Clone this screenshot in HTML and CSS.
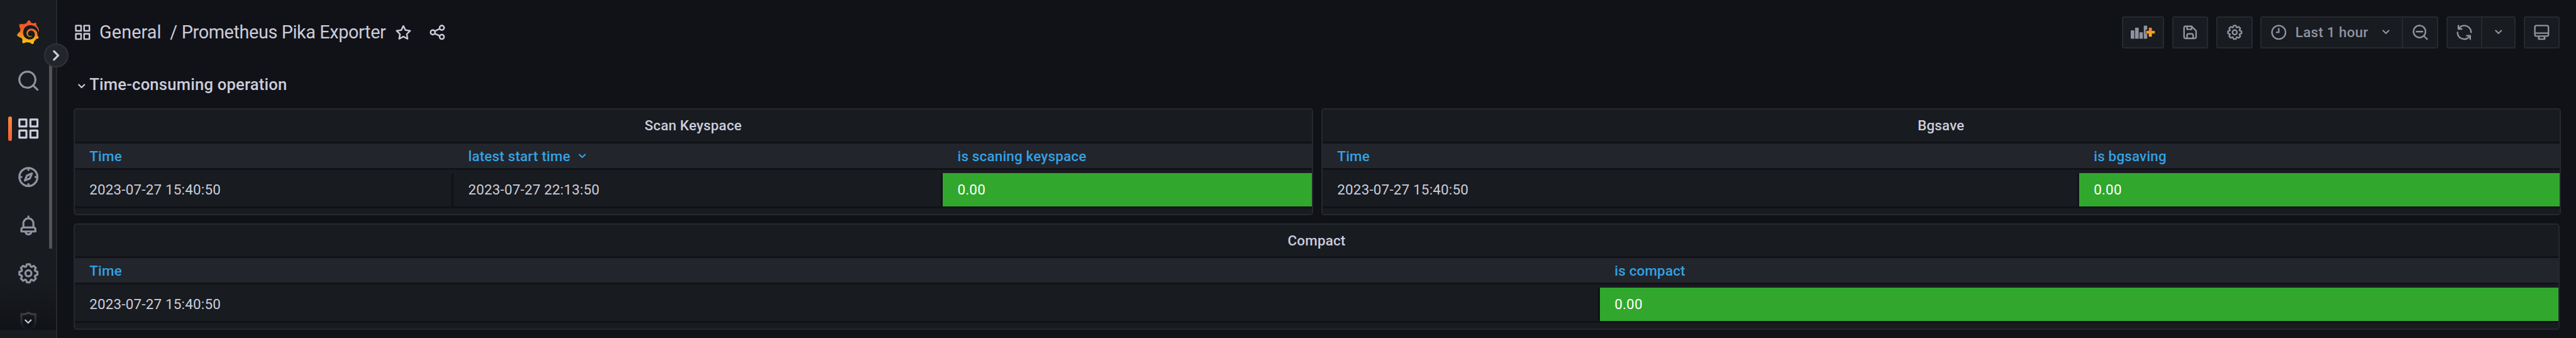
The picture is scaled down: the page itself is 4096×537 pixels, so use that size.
FILE: index.html
```html
<!DOCTYPE html>
<html lang="en">
<head>
<meta charset="utf-8">
<title>Prometheus Pika Exporter</title>
<link rel="stylesheet" href="styles.css">
</head>
<body>
<svg class="defs" aria-hidden="true">
  <defs>
    <symbol id="apps" viewBox="0 0 24 24"><path d="M10,13H3a1,1,0,0,0-1,1v7a1,1,0,0,0,1,1h7a1,1,0,0,0,1-1V14A1,1,0,0,0,10,13ZM9,20H4V15H9ZM21,2H14a1,1,0,0,0-1,1v7a1,1,0,0,0,1,1h7a1,1,0,0,0,1-1V3A1,1,0,0,0,21,2ZM20,9H15V4h5Zm1,4H14a1,1,0,0,0-1,1v7a1,1,0,0,0,1,1h7a1,1,0,0,0,1-1V14A1,1,0,0,0,21,13Zm-1,7H15V15h5ZM10,2H3A1,1,0,0,0,2,3v7a1,1,0,0,0,1,1h7a1,1,0,0,0,1-1V3A1,1,0,0,0,10,2ZM9,9H4V4H9Z"/></symbol>
    <symbol id="search" viewBox="0 0 24 24"><path d="M21.71,20.29,18,16.61A9,9,0,1,0,16.61,18l3.68,3.68a1,1,0,0,0,1.42,0A1,1,0,0,0,21.71,20.29ZM11,18a7,7,0,1,1,7-7A7,7,0,0,1,11,18Z"/></symbol>
    <symbol id="compass" viewBox="0 0 24 24"><path d="M12,2A10,10,0,1,0,22,12,10,10,0,0,0,12,2Zm1,17.93V19a1,1,0,0,0-2,0v.93A8,8,0,0,1,4.07,13H5a1,1,0,0,0,0-2H4.07A8,8,0,0,1,11,4.07V5a1,1,0,0,0,2,0V4.07A8,8,0,0,1,19.93,11H19a1,1,0,0,0,0,2h.93A8,8,0,0,1,13,19.93ZM15.14,7.55l-5,2.12a1,1,0,0,0-.52.52l-2.12,5a1,1,0,0,0,.21,1.1,1,1,0,0,0,.7.3.93.93,0,0,0,.4-.09l5-2.12a1,1,0,0,0,.52-.52l2.12-5a1,1,0,0,0-1.31-1.31Zm-2.49,5.1-2.28,1,1-2.28,2.28-1Z"/></symbol>
    <symbol id="bell" viewBox="0 0 24 24"><path d="M18,13.18V10a6,6,0,0,0-5-5.91V3a1,1,0,0,0-2,0V4.09A6,6,0,0,0,6,10v3.18A3,3,0,0,0,4,16v2a1,1,0,0,0,1,1H8.14a4,4,0,0,0,7.72,0H19a1,1,0,0,0,1-1V16A3,3,0,0,0,18,13.18ZM8,10a4,4,0,0,1,8,0v3H8Zm4,10a2,2,0,0,1-1.72-1h3.44A2,2,0,0,1,12,20Zm6-3H6V16a1,1,0,0,1,1-1H17a1,1,0,0,1,1,1Z"/></symbol>
    <symbol id="cog" viewBox="0 0 24 24"><path d="M21.32,9.55l-1.89-.63.89-1.78A1,1,0,0,0,20.13,6L18,3.87a1,1,0,0,0-1.15-.19l-1.78.89-.63-1.89A1,1,0,0,0,13.5,2h-3a1,1,0,0,0-.95.68L8.92,4.57,7.14,3.68A1,1,0,0,0,6,3.87L3.87,6a1,1,0,0,0-.19,1.15l.89,1.78-1.89.63A1,1,0,0,0,2,10.5v3a1,1,0,0,0,.68.95l1.89.63-.89,1.78A1,1,0,0,0,3.87,18L6,20.13a1,1,0,0,0,1.15.19l1.78-.89.63,1.89a1,1,0,0,0,.95.68h3a1,1,0,0,0,.95-.68l.63-1.89,1.78.89A1,1,0,0,0,18,20.13L20.13,18a1,1,0,0,0,.19-1.15l-.89-1.78,1.89-.63A1,1,0,0,0,22,13.5v-3A1,1,0,0,0,21.32,9.55ZM20,12.78l-1.2.4A2,2,0,0,0,17.64,16l.57,1.14-1.1,1.1L16,17.64a2,2,0,0,0-2.79,1.16l-.4,1.2H11.22l-.4-1.2A2,2,0,0,0,8,17.64l-1.14.57-1.1-1.1L6.36,16A2,2,0,0,0,5.2,13.18L4,12.78V11.22l1.2-.4A2,2,0,0,0,6.36,8L5.79,6.89l1.1-1.1L8,6.36A2,2,0,0,0,10.82,5.2l.4-1.2h1.56l.4,1.2A2,2,0,0,0,16,6.36l1.14-.57,1.1,1.1L17.64,8a2,2,0,0,0,1.16,2.79l1.2.4ZM12,8a4,4,0,1,0,4,4A4,4,0,0,0,12,8Zm0,6a2,2,0,1,1,2-2A2,2,0,0,1,12,14Z"/></symbol>
    <symbol id="shield" viewBox="0 0 24 24"><path d="M19.63,3.65a1,1,0,0,0-.84-.2,8,8,0,0,1-6.22-1.27,1,1,0,0,0-1.14,0A8,8,0,0,1,5.21,3.45a1,1,0,0,0-.84.2A1,1,0,0,0,4,4.43v7.45a9,9,0,0,0,3.77,7.33l3.65,2.6a1,1,0,0,0,1.16,0l3.65-2.6A9,9,0,0,0,20,11.88V4.43A1,1,0,0,0,19.63,3.65ZM18,11.88a7,7,0,0,1-2.93,5.7L12,19.77,8.93,17.58A7,7,0,0,1,6,11.88V5.58a10,10,0,0,0,6-1.39,10,10,0,0,0,6,1.39Z"/></symbol>
    <symbol id="angle-down" viewBox="0 0 24 24"><path d="M17,9.17a1,1,0,0,0-1.41,0L12,12.71,8.46,9.17a1,1,0,0,0-1.41,0,1,1,0,0,0,0,1.42l4.24,4.24a1,1,0,0,0,1.42,0L17,10.59A1,1,0,0,0,17,9.17Z"/></symbol>
    <symbol id="angle-right" viewBox="0 0 24 24"><path d="M14.83,11.29,10.59,7.05a1,1,0,0,0-1.42,0,1,1,0,0,0,0,1.41L12.71,12,9.17,15.54a1,1,0,0,0,0,1.41,1,1,0,0,0,.71.29,1,1,0,0,0,.71-.29l4.24-4.24A1,1,0,0,0,14.83,11.29Z"/></symbol>
    <symbol id="star" viewBox="0 0 24 24"><path d="M22,9.67A1,1,0,0,0,21.14,9l-5.69-.83L12.9,3a1,1,0,0,0-1.8,0L8.55,8.16,2.86,9a1,1,0,0,0-.81.68,1,1,0,0,0,.25,1l4.13,4-1,5.68A1,1,0,0,0,6.9,21.44L12,18.77l5.1,2.67a.93.93,0,0,0,.46.12,1,1,0,0,0,.59-.19,1,1,0,0,0,.4-1l-1-5.68,4.13-4A1,1,0,0,0,22,9.67Zm-6.15,4a1,1,0,0,0-.29.88l.72,4.2-3.76-2a1.06,1.06,0,0,0-.94,0l-3.76,2,.72-4.2a1,1,0,0,0-.29-.88l-3-3,4.21-.61a1,1,0,0,0,.76-.55L12,5.7l1.88,3.82a1,1,0,0,0,.76.55l4.21.61Z"/></symbol>
    <symbol id="share" viewBox="0 0 24 24"><path d="M18,14a4,4,0,0,0-3.08,1.48l-5.1-2.35a3.64,3.64,0,0,0,0-2.26l5.1-2.35A4,4,0,1,0,14,6a4.17,4.17,0,0,0,.07.71L8.79,9.14a4,4,0,1,0,0,5.72l5.28,2.43A4.17,4.17,0,0,0,14,18a4,4,0,1,0,4-4ZM18,4a2,2,0,1,1-2,2A2,2,0,0,1,18,4ZM6,14a2,2,0,1,1,2-2A2,2,0,0,1,6,14Zm12,6a2,2,0,1,1,2-2A2,2,0,0,1,18,20Z"/></symbol>
    <symbol id="save" viewBox="0 0 24 24"><path d="M20.71,9.29l-6-6a1,1,0,0,0-.32-.21A1.09,1.09,0,0,0,14,3H6A3,3,0,0,0,3,6V18a3,3,0,0,0,3,3H18a3,3,0,0,0,3-3V10A1,1,0,0,0,20.71,9.29ZM9,5h4V7H9Zm6,14H9V16a1,1,0,0,1,1-1h4a1,1,0,0,1,1,1Zm4-1a1,1,0,0,1-1,1H17V16a3,3,0,0,0-3-3H10a3,3,0,0,0-3,3v3H6a1,1,0,0,1-1-1V6A1,1,0,0,1,6,5H7V8A1,1,0,0,0,8,9h6a1,1,0,0,0,1-1V6.41l4,4Z"/></symbol>
    <symbol id="clock" viewBox="0 0 24 24"><path d="M12,2A10,10,0,1,0,22,12,10,10,0,0,0,12,2Zm0,18a8,8,0,1,1,8-8A8,8,0,0,1,12,20ZM12,6a1,1,0,0,0-1,1v4H9a1,1,0,0,0,0,2h3a1,1,0,0,0,1-1V7A1,1,0,0,0,12,6Z"/></symbol>
    <symbol id="search-minus" viewBox="0 0 24 24"><path d="M21.71,20.29,18,16.61A9,9,0,1,0,16.61,18l3.68,3.68a1,1,0,0,0,1.42,0A1,1,0,0,0,21.71,20.29ZM11,18a7,7,0,1,1,7-7A7,7,0,0,1,11,18Zm4-8H7a1,1,0,0,0,0,2h8a1,1,0,0,0,0-2Z"/></symbol>
    <symbol id="sync" viewBox="0 0 24 24"><path d="M19.91,15.51H15.38a1,1,0,0,0,0,2h2.4A8,8,0,0,1,4,12a1,1,0,0,0-2,0,10,10,0,0,0,16.88,7.23V21a1,1,0,0,0,2,0V16.5A1,1,0,0,0,19.91,15.51ZM12,2A10,10,0,0,0,5.12,4.77V3a1,1,0,0,0-2,0V7.5a1,1,0,0,0,1,1h4.5a1,1,0,0,0,0-2H6.22A8,8,0,0,1,20,12a1,1,0,0,0,2,0A10,10,0,0,0,12,2Z"/></symbol>
    <symbol id="monitor" viewBox="0 0 24 24"><path d="M19,2H5A3,3,0,0,0,2,5V15a3,3,0,0,0,3,3H7.64l-.58,1a2,2,0,0,0,0,2,2,2,0,0,0,1.75,1h6.46A2,2,0,0,0,17,21a2,2,0,0,0,0-2l-.59-1H19a3,3,0,0,0,3-3V5A3,3,0,0,0,19,2ZM8.77,20,10,18H14l1.2,2ZM20,15a1,1,0,0,1-1,1H5a1,1,0,0,1-1-1V14H20Zm0-3H4V5A1,1,0,0,1,5,4H19a1,1,0,0,1,1,1Z"/></symbol>
    <linearGradient id="logo-fill" gradientUnits="userSpaceOnUse" x1="175.5" y1="445" x2="175.5" y2="114">
      <stop offset="0" stop-color="#fff100"/><stop offset="1" stop-color="#f05a28"/>
    </linearGradient>
    <linearGradient id="plus-fill" gradientUnits="userSpaceOnUse" x1="0" y1="69" x2="0" y2="15">
      <stop offset="0" stop-color="#f9c20a"/><stop offset="1" stop-color="#ee7540"/>
    </linearGradient>
  </defs>
</svg>

<div class="app">
  <nav class="sidebar">
    <div class="nav-scroll">
      <a class="nav-item"><svg class="logo" viewBox="0 0 351 365"><path fill="url(#logo-fill)" d="M342,161.2c-0.6-6.1-1.6-13.1-3.6-20.9c-2-7.7-5-16.2-9.4-25c-4.4-8.8-10.1-17.9-17.5-26.8c-2.9-3.5-6.1-6.9-9.5-10.2c5.1-20.3-6.2-37.9-6.2-37.9c-19.5-1.2-31.9,6.1-36.5,9.4c-0.8-0.3-1.5-0.7-2.3-1c-3.3-1.3-6.7-2.6-10.3-3.7c-3.5-1.1-7.1-2.1-10.8-3c-3.7-0.9-7.4-1.6-11.2-2.2c-0.7-0.1-1.3-0.2-2-0.3c-8.5-27.2-32.9-38.6-32.9-38.6c-27.3,17.3-32.4,41.5-32.4,41.5s-0.1,0.5-0.3,1.4c-1.5,0.4-3,0.9-4.5,1.3c-2.1,0.6-4.2,1.4-6.2,2.2c-2.1,0.8-4.1,1.6-6.2,2.5c-4.1,1.8-8.2,3.8-12.2,6c-3.9,2.2-7.7,4.6-11.4,7.1c-0.5-0.2-1-0.4-1-0.4c-37.8-14.4-71.3,2.9-71.3,2.9c-3.1,40.2,15.1,65.5,18.7,70.1c-0.9,2.5-1.7,5-2.5,7.5c-2.8,9.1-4.9,18.4-6.2,28.1c-0.2,1.4-0.4,2.8-0.5,4.2C18.8,192.7,8.5,228,8.5,228c29.1,33.5,63.1,35.6,63.1,35.6c0,0,0.1-0.1,0.1-0.1c4.3,7.7,9.3,15,14.9,21.9c2.4,2.9,4.8,5.6,7.4,8.3c-10.6,30.4,1.5,55.6,1.5,55.6c32.4,1.2,53.7-14.2,58.2-17.7c3.2,1.1,6.5,2.1,9.8,2.9c10,2.6,20.2,4.1,30.4,4.5c2.5,0.1,5.1,0.2,7.6,0.1l1.2,0l0.8,0l1.6,0l1.6-0.1l0,0.1c15.3,21.8,42.1,24.9,42.1,24.9c19.1-20.1,20.2-40.1,20.2-44.4l0,0c0,0,0-0.1,0-0.3c0-0.4,0-0.6,0-0.6l0,0c0-0.3,0-0.6,0-0.9c4-2.8,7.8-5.8,11.4-9.1c7.6-6.9,14.3-14.8,19.9-23.3c0.5-0.8,1-1.6,1.5-2.4c21.6,1.2,36.9-13.4,36.9-13.4c-3.6-22.5-16.4-33.5-19.1-35.6l0,0c0,0-0.1-0.1-0.3-0.2c-0.2-0.1-0.2-0.2-0.2-0.2c0,0,0,0,0,0c-0.1-0.1-0.3-0.2-0.5-0.3c0.1-1.4,0.2-2.7,0.3-4.1c0.2-2.4,0.2-4.9,0.2-7.3l0-1.8l0-0.9l0-0.5c0-0.6,0-0.4,0-0.6l-0.1-1.5l-0.1-2c0-0.7-0.1-1.3-0.2-1.9c-0.1-0.6-0.1-1.3-0.2-1.9l-0.2-1.9l-0.3-1.9c-0.4-2.5-0.8-4.9-1.4-7.4c-2.3-9.7-6.1-18.9-11-27.2c-5-8.3-11.2-15.6-18.3-21.8c-7-6.2-14.9-11.2-23.1-14.9c-8.3-3.7-16.9-6.1-25.5-7.2c-4.3-0.6-8.6-0.8-12.9-0.7l-1.6,0l-0.4,0c-0.1,0-0.6,0-0.5,0l-0.7,0l-1.6,0.1c-0.6,0-1.2,0.1-1.7,0.1c-2.2,0.2-4.4,0.5-6.5,0.9c-8.6,1.6-16.7,4.7-23.8,9c-7.1,4.3-13.3,9.6-18.3,15.6c-5,6-8.9,12.7-11.6,19.6c-2.7,6.9-4.2,14.1-4.6,21c-0.1,1.7-0.1,3.5-0.1,5.2c0,0.4,0,0.9,0,1.3l0.1,1.4c0.1,0.8,0.1,1.7,0.2,2.5c0.3,3.5,1,6.9,1.9,10.1c1.9,6.5,4.9,12.4,8.6,17.4c3.7,5,8.2,9.1,12.9,12.4c4.7,3.2,9.8,5.5,14.8,7c5,1.5,10,2.1,14.7,2.1c0.6,0,1.2,0,1.7,0c0.3,0,0.6,0,0.9,0c0.3,0,0.6,0,0.9-0.1c0.5,0,1-0.1,1.5-0.1c0.1,0,0.3,0,0.4-0.1l0.5-0.1c0.3,0,0.6-0.1,0.9-0.1c0.6-0.1,1.1-0.2,1.7-0.3c0.6-0.1,1.1-0.2,1.6-0.4c1.1-0.2,2.1-0.6,3.1-0.9c2-0.7,4-1.5,5.7-2.4c1.8-0.9,3.4-2,5-3c0.4-0.3,0.9-0.6,1.3-1c1.6-1.3,1.9-3.7,0.6-5.3c-1.1-1.4-3.1-1.8-4.7-0.9c-0.4,0.2-0.8,0.4-1.2,0.6c-1.4,0.7-2.8,1.3-4.3,1.8c-1.5,0.5-3.1,0.9-4.7,1.2c-0.8,0.1-1.6,0.2-2.5,0.3c-0.4,0-0.8,0.1-1.3,0.1c-0.4,0-0.9,0-1.2,0c-0.4,0-0.8,0-1.2,0c-0.5,0-1,0-1.5-0.1c0,0-0.3,0-0.1,0l-0.2,0l-0.3,0c-0.2,0-0.5,0-0.7-0.1c-0.5-0.1-0.9-0.1-1.4-0.2c-3.7-0.5-7.4-1.6-10.9-3.2c-3.6-1.6-7-3.8-10.1-6.6c-3.1-2.8-5.8-6.1-7.9-9.9c-2.1-3.8-3.6-8-4.3-12.4c-0.3-2.2-0.5-4.5-0.4-6.7c0-0.6,0.1-1.2,0.1-1.8c0,0.2,0-0.1,0-0.1l0-0.2l0-0.5c0-0.3,0.1-0.6,0.1-0.9c0.1-1.2,0.3-2.4,0.5-3.6c1.7-9.6,6.5-19,13.9-26.1c1.9-1.8,3.9-3.4,6-4.9c2.1-1.5,4.4-2.8,6.8-3.9c2.4-1.1,4.8-2,7.4-2.7c2.5-0.7,5.1-1.1,7.8-1.4c1.3-0.1,2.6-0.2,4-0.2c0.4,0,0.6,0,0.9,0l1.1,0l0.7,0c0.3,0,0,0,0.1,0l0.3,0l1.1,0.1c2.9,0.2,5.7,0.6,8.5,1.3c5.6,1.2,11.1,3.3,16.2,6.1c10.2,5.7,18.9,14.5,24.2,25.1c2.7,5.3,4.6,11,5.5,16.9c0.2,1.5,0.4,3,0.5,4.5l0.1,1.1l0.1,1.1c0,0.4,0,0.8,0,1.1c0,0.4,0,0.8,0,1.1l0,1l0,1.1c0,0.7-0.1,1.9-0.1,2.6c-0.1,1.6-0.3,3.3-0.5,4.9c-0.2,1.6-0.5,3.2-0.8,4.8c-0.3,1.6-0.7,3.2-1.1,4.7c-0.8,3.1-1.8,6.2-3,9.3c-2.4,6-5.6,11.8-9.4,17.1c-7.7,10.6-18.2,19.2-30.2,24.7c-6,2.7-12.3,4.7-18.8,5.7c-3.2,0.6-6.5,0.9-9.8,1l-0.6,0l-0.5,0l-1.1,0l-1.6,0l-0.8,0c0.4,0-0.1,0-0.1,0l-0.3,0c-1.8,0-3.5-0.1-5.3-0.3c-7-0.5-13.9-1.8-20.7-3.7c-6.7-1.9-13.2-4.6-19.4-7.8c-12.3-6.6-23.4-15.6-32-26.5c-4.3-5.4-8.1-11.3-11.2-17.4c-3.1-6.1-5.6-12.6-7.4-19.1c-1.8-6.6-2.9-13.3-3.4-20.1l-0.1-1.3l0-0.3l0-0.3l0-0.6l0-1.1l0-0.3l0-0.4l0-0.8l0-1.6l0-0.3c0,0,0,0.1,0-0.1l0-0.6c0-0.8,0-1.7,0-2.5c0.1-3.3,0.4-6.8,0.8-10.2c0.4-3.4,1-6.9,1.7-10.3c0.7-3.4,1.5-6.8,2.5-10.2c1.9-6.7,4.3-13.2,7.1-19.3c5.7-12.2,13.1-23.1,22-31.8c2.2-2.2,4.5-4.2,6.9-6.2c2.4-1.9,4.9-3.7,7.5-5.4c2.5-1.7,5.2-3.2,7.9-4.6c1.3-0.7,2.7-1.4,4.1-2c0.7-0.3,1.4-0.6,2.1-0.9c0.7-0.3,1.4-0.6,2.1-0.9c2.8-1.2,5.7-2.2,8.7-3.1c0.7-0.2,1.5-0.4,2.2-0.7c0.7-0.2,1.5-0.4,2.2-0.6c1.5-0.4,3-0.8,4.5-1.1c0.7-0.2,1.5-0.3,2.3-0.5c0.8-0.2,1.5-0.3,2.3-0.5c0.8-0.1,1.5-0.3,2.3-0.4l1.1-0.2l1.2-0.2c0.8-0.1,1.5-0.2,2.3-0.3c0.9-0.1,1.7-0.2,2.6-0.3c0.7-0.1,1.9-0.2,2.6-0.3c0.5-0.1,1.1-0.1,1.6-0.2l1.1-0.1l0.5-0.1l0.6,0c0.9-0.1,1.7-0.1,2.6-0.2l1.3-0.1c0,0,0.5,0,0.1,0l0.3,0l0.6,0c0.7,0,1.5-0.1,2.2-0.1c2.9-0.1,5.9-0.1,8.8,0c5.8,0.2,11.5,0.9,17,1.9c11.1,2.1,21.5,5.6,31,10.3c9.5,4.6,17.9,10.3,25.3,16.5c0.5,0.4,0.9,0.8,1.4,1.2c0.4,0.4,0.9,0.8,1.3,1.2c0.9,0.8,1.7,1.6,2.6,2.4c0.9,0.8,1.7,1.6,2.5,2.4c0.8,0.8,1.6,1.6,2.4,2.5c3.1,3.3,6,6.6,8.6,10c5.2,6.7,9.4,13.5,12.7,19.9c0.2,0.4,0.4,0.8,0.6,1.2c0.2,0.4,0.4,0.8,0.6,1.2c0.4,0.8,0.8,1.6,1.1,2.4c0.4,0.8,0.7,1.5,1.1,2.3c0.3,0.8,0.7,1.5,1,2.3c1.2,3,2.4,5.9,3.3,8.6c1.5,4.4,2.6,8.3,3.5,11.7c0.3,1.4,1.6,2.3,3,2.1c1.5-0.1,2.6-1.3,2.6-2.8C342.6,170.4,342.5,166.1,342,161.2z"/></svg></a>
      <a class="nav-item"><svg class="icon-24"><use href="#search"/></svg></a>
      <a class="nav-item active"><svg class="icon-24"><use href="#apps"/></svg></a>
      <a class="nav-item"><svg class="icon-24"><use href="#compass"/></svg></a>
      <a class="nav-item"><svg class="icon-24"><use href="#bell"/></svg></a>
      <a class="nav-item"><svg class="icon-24"><use href="#cog"/></svg></a>
      <a class="nav-item"><svg class="icon-24"><use href="#shield"/></svg></a>
      <div class="scroll-thumb"></div>
      <div class="scroll-more"><svg class="icon-16"><use href="#angle-down"/></svg></div>
    </div>
    <button class="nav-toggle"><svg class="icon-24"><use href="#angle-right"/></svg></button>
  </nav>

  <main class="main">
    <header class="toolbar">
      <div class="crumbs">
        <svg class="icon-18"><use href="#apps"/></svg>
        <span class="folder">General</span>
        <span class="slash">/</span>
        <span class="name">Prometheus Pika Exporter</span>
        <svg class="icon-18 star"><use href="#star"/></svg>
        <svg class="icon-18 share"><use href="#share"/></svg>
      </div>
      <div class="actions">
        <button class="btn btn-add">
          <svg class="add-panel" viewBox="0 0 144 84"><path d="M1.5 31h18.500a1.500 1.500 0 0 1 1.500 1.500V81H0V32.500A1.500 1.500 0 0 1 1.500 31ZM27.500 15H46a1.500 1.500 0 0 1 1.500 1.500V81H26V16.500A1.500 1.500 0 0 1 27.500 15ZM53 42h18.500a1 1 0 0 1 1 1v38H52V43a1 1 0 0 1 1-1ZM79.500 3H97a1.500 1.500 0 0 1 1.500 1.500V27H92a3 3 0 0 0-3 3v18a3 3 0 0 0 3 3h6.500v30H78V4.500A1.500 1.500 0 0 1 79.500 3Z"/><path fill="url(#plus-fill)" d="M110 15h14a2 2 0 0 1 2 2v17h16a2 2 0 0 1 2 2v12a2 2 0 0 1-2 2h-16v17a2 2 0 0 1-2 2h-14a2 2 0 0 1-2-2V50H94a2 2 0 0 1-2-2V36a2 2 0 0 1 2-2h14V17a2 2 0 0 1 2-2Z"/></svg>
        </button>
        <button class="btn"><svg class="icon-18"><use href="#save"/></svg></button>
        <button class="btn"><svg class="icon-18"><use href="#cog"/></svg></button>
        <div class="group">
          <button class="btn btn-time"><svg class="icon-18"><use href="#clock"/></svg><span class="range">Last 1 hour</span><svg class="icon-16"><use href="#angle-down"/></svg></button>
          <button class="btn"><svg class="icon-18"><use href="#search-minus"/></svg></button>
        </div>
        <div class="group">
          <button class="btn"><svg class="icon-18"><use href="#sync"/></svg></button>
          <button class="btn btn-interval"><svg class="icon-16"><use href="#angle-down"/></svg></button>
        </div>
        <button class="btn"><svg class="icon-18"><use href="#monitor"/></svg></button>
      </div>
    </header>

    <div class="row-title"><svg class="icon-16"><use href="#angle-down"/></svg><span>Time-consuming operation</span></div>

    <div class="panels">
      <section class="panel half scan">
        <h2 class="panel-title">Scan Keyspace</h2>
        <div class="thead"><div class="col">Time</div><div class="col">latest start time<svg class="icon-16 sort"><use href="#angle-down"/></svg></div><div class="col">is scaning keyspace</div></div>
        <div class="trow"><div class="col">2023-07-27 15:40:50</div><div class="col">2023-07-27 22:13:50</div><div class="col ok">0.00</div></div>
      </section>
      <section class="panel half bgsave">
        <h2 class="panel-title">Bgsave</h2>
        <div class="thead"><div class="col">Time</div><div class="col">is bgsaving</div></div>
        <div class="trow"><div class="col">2023-07-27 15:40:50</div><div class="col ok">0.00</div></div>
      </section>
      <section class="panel full compact">
        <h2 class="panel-title">Compact</h2>
        <div class="thead"><div class="col">Time</div><div class="col">is compact</div></div>
        <div class="trow"><div class="col">2023-07-27 15:40:50</div><div class="col ok">0.00</div></div>
      </section>
    </div>
  </main>
</div>
</body>
</html>
```
FILE: styles.css
```css
/* 0.1rem is one design pixel */
html { font-size: 15.97504px; }
*, *::before, *::after { box-sizing: border-box; }
body {
  margin: 0;
  background: #111217;
  color: #ccccdc;
  font-family: Roboto, "Liberation Sans", sans-serif;
  font-size: 1.4rem;
  letter-spacing: 0.0095em;
  overflow: hidden;
}
button { font: inherit; letter-spacing: inherit; color: inherit; margin: 0; padding: 0; }
svg { display: block; flex: none; fill: currentColor; }
.defs { position: absolute; width: 0; height: 0; }
.icon-16 { width: 1.6rem; height: 1.6rem; }
.icon-18 { width: 1.8rem; height: 1.8rem; }
.icon-24 { width: 2.4rem; height: 2.4rem; }

.app { display: flex; width: 100vw; height: 100vh; }

/* Sidebar */
.sidebar {
  position: relative;
  z-index: 1;
  flex: none;
  width: 5.7rem;
  height: 100%;
  background: #181b1f;
  border-right: 2px solid #26282d;
}
.nav-scroll {
  position: relative;
  height: 32.8rem;
  padding-top: 0.8rem;
  overflow: hidden;
}
.nav-item {
  position: relative;
  display: flex;
  align-items: center;
  justify-content: center;
  width: 5.6rem;
  height: 4.8rem;
  color: #9192a0;
}
.nav-item.active { color: #ccccdc; }
.nav-item.active::before {
  content: "";
  position: absolute;
  left: 0.8rem;
  top: 1.2rem;
  width: 0.4rem;
  height: 2.4rem;
  border-radius: 0.2rem;
  background: linear-gradient(180deg, #ff8833, #f55f3e);
}
.logo { width: 2.31rem; height: 2.4rem; }
.scroll-thumb {
  position: absolute;
  left: 4.9rem;
  top: 5.6rem;
  width: 0.3rem;
  height: 19.1rem;
  background: #525355;
}
.scroll-more {
  position: absolute;
  left: 0;
  bottom: 0;
  width: 5.6rem;
  height: 4.8rem;
  display: flex;
  justify-content: center;
  padding-top: 3.2rem;
  background: linear-gradient(0deg, #111217, rgba(17, 18, 23, 0));
}
.nav-toggle {
  position: absolute;
  left: 4.4rem;
  top: 4.3rem;
  width: 2.4rem;
  height: 2.4rem;
  display: flex;
  align-items: center;
  justify-content: center;
  border: 2px solid #313339;
  border-radius: 50%;
  background: #22252b;
}

/* Page header */
.main { flex: 1; min-width: 0; padding: 1.6rem 1.5rem 0 1.6rem; }
.toolbar {
  display: flex;
  align-items: center;
  justify-content: space-between;
  height: 3.2rem;
  padding-right: 0.1rem;
}
.crumbs { display: flex; align-items: center; font-size: 1.8rem; letter-spacing: 0; line-height: 3.2rem; white-space: nowrap; }
.folder { margin-left: 0.8rem; padding-top: 0.1rem; letter-spacing: 0.004em; }
.slash { margin-left: 0.85rem; padding-top: 0.1rem; }
.name { margin-left: 0.42rem; padding-top: 0.1rem; letter-spacing: -0.0125em; }
.star { margin-left: 0.84rem; }
.share { margin-left: 1.6rem; }

.actions { display: flex; gap: 0.8rem; color: #9192a0; }
.group { display: flex; }
.btn {
  display: flex;
  align-items: center;
  justify-content: center;
  width: 3.6rem;
  height: 3.2rem;
  border: 2px solid #26292e;
  border-radius: 0.2rem;
  background: #181b1f;
}
.btn-add { width: 4.2rem; }
.add-panel { width: 2.4rem; height: 1.4rem; }
.btn-time {
  width: 14.2rem;
  justify-content: flex-start;
  padding-left: 0.78rem;
  font-weight: 500;
}
.range { width: 7.4rem; margin: 0 0.8rem 0 0.76rem; text-align: left; white-space: nowrap; letter-spacing: 0.014em; }
.btn-interval { width: 3.4rem; }
.group .btn:first-child { border-top-right-radius: 0; border-bottom-right-radius: 0; }
.group .btn:last-child { border-top-left-radius: 0; border-bottom-left-radius: 0; }
.group .btn + .btn { margin-left: -2px; }
.group .btn-time + .btn { width: calc(3.5rem + 2px); }
.group .btn-interval { width: calc(3.3rem + 2px); }

/* Dashboard row */
.row-title {
  display: flex;
  align-items: center;
  height: 2.4rem;
  margin-top: 2.4rem;
  font-size: 1.6rem;
  font-weight: 500;
  letter-spacing: 0.0095em;
}
.row-title svg { position: relative; top: 0.16rem; }

/* Panels */
.panels { display: flex; flex-wrap: wrap; gap: 0.8rem; margin-top: 1.2rem; }
.panel {
  height: 10.6rem;
  border: 2px solid #25282c;
  border-radius: 0.3rem;
  background: #181b1f;
}
.half { width: 123.4rem; }
.full { width: 247.5rem; }
.panel-title {
  margin: 0;
  height: calc(3.3rem - 2px);
  line-height: 3.2rem;
  font-size: 1.4rem;
  font-weight: 500;
  text-align: center;
}
.thead, .trow { display: grid; }
.scan .thead, .scan .trow { grid-template-columns: 37.7rem 48.7rem 1fr; }
.bgsave .thead, .bgsave .trow { grid-template-columns: 75.3rem 1fr; }
.compact .thead, .compact .trow { grid-template-columns: 151.8rem 1fr; }
.thead {
  height: 2.8rem;
  border-top: 0.2rem solid #111217;
  border-bottom: 0.2rem solid #111217;
  background: #22252b;
  color: #33a2e5;
  font-weight: 500;
}
.trow {
  height: 3.8rem;
  padding-top: 0.3rem;
  border-bottom: 0.2rem solid #111217;
}
.col { display: flex; align-items: center; padding-left: 1.48rem; white-space: nowrap; }
.trow .col { padding-bottom: 0.06rem; }
.trow .col:not(:last-child) { border-right: 0.2rem solid #111217; }
.trow .ok { background: #31a82d; color: #fff; }
.sort { margin-left: 0.4rem; }
```
